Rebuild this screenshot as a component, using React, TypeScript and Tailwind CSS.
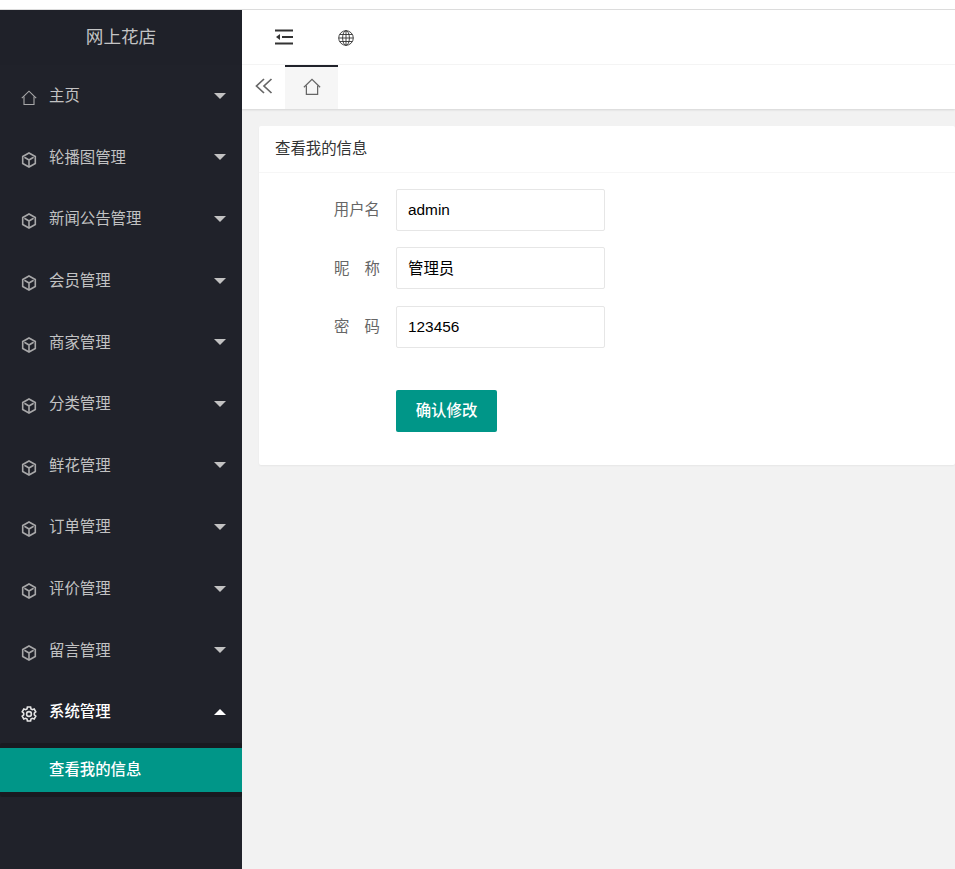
import React from 'react';

const FONT = "font-['Liberation_Sans','Noto_Sans_CJK_SC',sans-serif]";

const menus = [
  '轮播图管理',
  '新闻公告管理',
  '会员管理',
  '商家管理',
  '分类管理',
  '鲜花管理',
  '订单管理',
  '评价管理',
  '留言管理',
];

function HomeIcon({ className }: { className?: string }) {
  return (
    <svg viewBox="0 0 16 16" fill="none" stroke="currentColor" strokeWidth="1.1" className={className}>
      <path d="M0.8 8.2 8 1.2l7.2 7" />
      <path d="M3 6.6v7.9h10V6.6" />
    </svg>
  );
}

function BoxIcon() {
  return (
    <svg viewBox="0 0 16 16" fill="none" stroke="currentColor" strokeWidth="1.6" className="w-[16px] h-[16px] shrink-0 text-[#a8a8a9]">
      <path d="M8 1 14.3 4.5v7L8 15l-6.300-3.500v-7z" />
      <path d="M3.4 5.3 8 8l4.600-2.700M8 8v6" />
    </svg>
  );
}

function GearIcon() {
  return (
    <svg viewBox="0 0 16 16" fill="none" stroke="currentColor" strokeWidth="1.6" className="w-[16px] h-[16px] shrink-0 text-[#e4e4e4]">
      <path d="M6.4 1h3.2l.4 2 1.300.7 1.900-.7 1.600 2.800-1.500 1.300v1.800l1.500 1.300-1.600 2.800-1.900-.7-1.300.7-.4 2H6.400l-.4-2-1.300-.7-1.900.7-1.600-2.800 1.500-1.300V7.100L1.200 5.800l1.600-2.800 1.900.7L6 3z" />
      <circle cx="8" cy="8" r="2.4" />
    </svg>
  );
}

function NavRow({ label, icon, open }: { label: string; icon: React.ReactNode; open?: boolean }) {
  return (
    <div className={`h-[61.6px] flex items-center pl-[21px] pr-[16px] text-[15.4px] ${open ? 'text-white font-medium' : 'text-[#c2c2c3]'}`}>
      <span className="w-[28px] shrink-0 flex items-center pt-[5px]">{icon}</span>
      <span className="flex-1">{label}</span>
      {open ? (
        <span className="w-0 h-0 border-x-[6px] border-x-transparent border-b-[6px] border-b-white" />
      ) : (
        <span className="w-0 h-0 border-x-[6px] border-x-transparent border-t-[6px] border-t-[#c2c2c2]" />
      )}
    </div>
  );
}

function Field({ label, value }: { label: React.ReactNode; value: string }) {
  return (
    <div className="flex items-center">
      <div className="w-[137px] flex justify-end pr-[16px] text-[15.4px] text-[#666]">{label}</div>
      <div className="w-[209px] h-[42px] flex items-center border border-[#e6e6e6] rounded-[2px] pl-[11px] text-[15.4px] text-black bg-white">
        {value}
      </div>
    </div>
  );
}

function SpacedLabel({ a, b }: { a: string; b: string }) {
  return (
    <span className="w-[46px] flex justify-between">
      <span>{a}</span>
      <span>{b}</span>
    </span>
  );
}

export default function App() {
  return (
    <div className={`${FONT} w-[955px] h-[869px] overflow-hidden flex flex-col bg-white`}>
      <div className="h-[10px] shrink-0 border-b border-[#dcdcdc]" />
      <div className="flex flex-1 min-h-0">
        <aside className="w-[242px] shrink-0 bg-[#20222a] flex flex-col">
          <div className="h-[55px] shrink-0 flex items-center justify-center text-[17.6px] text-[#c4c4c5] bg-[#1f2129]">
            网上花店
          </div>
          <NavRow label="主页" icon={<HomeIcon className="w-[16px] h-[16px] text-[#a8a8a9]" />} />
          {menus.map((m) => (
            <NavRow key={m} label={m} icon={<BoxIcon />} />
          ))}
          <NavRow label="系统管理" icon={<GearIcon />} open />
          <div className="bg-[#191a20] py-[5px] rounded-[2px]">
            <div className="h-[44px] bg-[#009688] pl-[49px] flex items-center text-[15.4px] font-medium text-white">
              查看我的信息
            </div>
          </div>
        </aside>

        <div className="flex-1 min-w-0 flex flex-col bg-[#f2f2f2]">
          <header className="h-[55px] shrink-0 bg-white border-b border-[#f6f6f6] flex items-center text-[#333]">
            <svg viewBox="0 0 18 16" className="w-[18px] h-[16px] ml-[33px]" fill="currentColor">
              <rect x="0" y="0.5" width="18" height="2" />
              <rect x="0" y="13.5" width="18" height="2" />
              <rect x="7" y="7" width="11" height="2" />
              <path d="M1 8l4-3v6z" />
            </svg>
            <svg viewBox="0 0 16 16" fill="none" stroke="currentColor" strokeWidth="0.9" className="w-[16px] h-[16px] ml-[45px] mt-[1px]">
              <circle cx="8" cy="8" r="7.3" />
              <ellipse cx="8" cy="8" rx="3.4" ry="7.3" />
              <path d="M8 .7v14.600M.7 8h14.600M1.700 4.500h12.600M1.700 11.500h12.600" />
            </svg>
          </header>
          <div className="h-[44px] shrink-0 bg-white flex shadow-[0_1px_2px_rgba(0,0,0,0.12)]">
            <div className="w-[43px] flex items-center justify-center text-[#666] pl-[1px] pb-[2px]">
              <svg viewBox="0 0 18 16" fill="none" stroke="currentColor" strokeWidth="1.7" className="w-[18px] h-[16px]">
                <path d="M9 1 1.500 8 9 15M16.500 1 9 8l7.500 7" />
              </svg>
            </div>
            <div className="w-[53px] bg-[#f6f6f6] border-t-2 border-[#20222a] flex items-center justify-center text-[#666] pb-[2px]">
              <HomeIcon className="w-[18px] h-[18px]" />
            </div>
          </div>
          <main className="pl-[17px] pt-[17px]">
            <section className="bg-white rounded-[2px] shadow-[0_1px_2px_rgba(0,0,0,0.05)] h-[339px]">
              <div className="h-[47px] px-[16px] flex items-center border-b border-[#f6f6f6] text-[15.4px] text-[#333]">
                查看我的信息
              </div>
              <div className="pt-[15.7px] flex flex-col gap-[16.5px]">
                <Field label="用户名" value="admin" />
                <Field label={<SpacedLabel a="昵" b="称" />} value="管理员" />
                <Field label={<SpacedLabel a="密" b="码" />} value="123456" />
              </div>
              <button className="mt-[42px] ml-[137px] w-[101px] h-[42px] bg-[#009688] rounded-[2px] text-white text-[15.4px] font-medium">
                确认修改
              </button>
            </section>
          </main>
        </div>
      </div>
    </div>
  );
}
